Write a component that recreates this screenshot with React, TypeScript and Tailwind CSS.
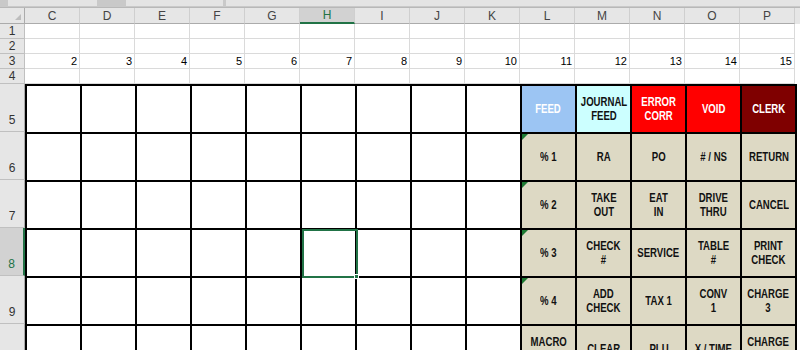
import React from "react";

const cols = ["C", "D", "E", "F", "G", "H", "I", "J", "K", "L", "M", "N", "O", "P"];

interface Key {
  lines: string[];
  cls: string;
  flag?: boolean;
}

const beige = "bg-[#ddd9c4] text-[#111]";

const keyRows: Key[][] = [
  [
    { lines: ["FEED"], cls: "bg-[#9cc5f3] text-white" },
    { lines: ["JOURNAL", "FEED"], cls: "bg-[#ccffff] text-[#111]" },
    { lines: ["ERROR", "CORR"], cls: "bg-[#ff0000] text-white" },
    { lines: ["VOID"], cls: "bg-[#ff0000] text-white" },
    { lines: ["CLERK"], cls: "bg-[#7f0000] text-white" },
  ],
  [
    { lines: ["% 1"], cls: beige, flag: true },
    { lines: ["RA"], cls: beige },
    { lines: ["PO"], cls: beige },
    { lines: ["# / NS"], cls: beige },
    { lines: ["RETURN"], cls: beige },
  ],
  [
    { lines: ["% 2"], cls: beige, flag: true },
    { lines: ["TAKE", "OUT"], cls: beige },
    { lines: ["EAT", "IN"], cls: beige },
    { lines: ["DRIVE", "THRU"], cls: beige },
    { lines: ["CANCEL"], cls: beige },
  ],
  [
    { lines: ["% 3"], cls: beige, flag: true },
    { lines: ["CHECK", "#"], cls: beige },
    { lines: ["SERVICE"], cls: beige },
    { lines: ["TABLE", "#"], cls: beige },
    { lines: ["PRINT", "CHECK"], cls: beige },
  ],
  [
    { lines: ["% 4"], cls: beige, flag: true },
    { lines: ["ADD", "CHECK"], cls: beige },
    { lines: ["TAX 1"], cls: beige },
    { lines: ["CONV", "1"], cls: beige },
    { lines: ["CHARGE", "3"], cls: beige },
  ],
  [
    { lines: ["MACRO", "1"], cls: beige },
    { lines: ["CLEAR"], cls: beige },
    { lines: ["PLU"], cls: beige },
    { lines: ["X / TIME"], cls: beige },
    { lines: ["CHARGE", "4"], cls: beige },
  ],
];

function ColHeader({ name }: { name: string }) {
  const active = name === "H";
  return (
    <div
      className={`w-[55px] shrink-0 flex items-center justify-center border-r border-[#cfcfcf] ${
        active
          ? "bg-[#d2d2d2] text-[#217346] border-b-2 border-b-[#217346]"
          : "text-[#444] border-b border-b-[#ababab]"
      }`}
    >
      {name}
    </div>
  );
}

function SmallRow({ n }: { n: number }) {
  return (
    <div className="flex h-[15px]">
      <div className="w-[25px] shrink-0 flex items-end justify-center bg-[#e6e6e6] border-r border-b border-[#c0c0c0] text-[#333] leading-[13px] text-[12px]">
        {n}
      </div>
      {cols.map((c, i) => (
        <div
          key={c}
          className="w-[55px] shrink-0 bg-white border-r border-b border-[#dadada] flex items-end justify-end pr-[2px] text-black leading-[13px]"
        >
          {n === 3 ? i + 2 : ""}
        </div>
      ))}
    </div>
  );
}

function KeyCell({ k }: { k: Key }) {
  return (
    <div className={`relative flex items-center justify-center ${k.cls}`}>
      {k.flag && (
        <svg className="absolute left-0 top-0" width="6" height="6" viewBox="0 0 6 6">
          <polygon points="0,0 6,0 0,6" fill="#1d7a34" />
        </svg>
      )}
      <div className="flex flex-col items-center font-bold text-[12px] leading-[14px] scale-x-[0.8] whitespace-nowrap">
        {k.lines.map((l) => (
          <span key={l}>{l}</span>
        ))}
      </div>
    </div>
  );
}

export default function App() {
  const rowNums = [5, 6, 7, 8, 9, 10];
  return (
    <div className="w-[800px] h-[350px] overflow-hidden bg-white font-['Liberation_Sans',Arial,sans-serif] text-[11px] select-none">
      {/* ribbon remnants */}
      <div className="h-[8px] bg-[#c9c9c9] flex items-start gap-[3px] pl-[8px] border-b border-[#b8b8b8]">
        <div className="w-[89px] h-[6px] bg-[#e4e4e4]" />
        <div className="w-[23px]" />
        <div className="w-[97px] h-[6px] bg-[#e4e4e4]" />
        <div className="flex-1 h-[6px] bg-[#e4e4e4]" />
      </div>

      {/* column headers */}
      <div className="flex h-[16px] bg-[#e6e6e6] text-[12px]">
        <div className="w-[25px] shrink-0 relative border-r border-b border-[#ababab] bg-[#e6e6e6]">
          <svg className="absolute right-[3px] bottom-[3px]" width="6" height="6" viewBox="0 0 6 6">
            <polygon points="6,0 6,6 0,6" fill="#bdbdbd" />
          </svg>
        </div>
        {cols.map((c) => (
          <ColHeader key={c} name={c} />
        ))}
      </div>

      {[1, 2, 3, 4].map((n) => (
        <SmallRow key={n} n={n} />
      ))}

      {/* bordered area */}
      <div className="flex">
        <div className="w-[25px] shrink-0 flex flex-col">
          {rowNums.map((n) => (
            <div
              key={n}
              className={`h-[48px] shrink-0 flex items-end justify-center pb-[2px] text-[12px] border-b border-[#c0c0c0] ${
                n === 8
                  ? "bg-[#d2d2d2] text-[#217346] border-r-2 border-r-[#217346]"
                  : "bg-[#e6e6e6] text-[#333] border-r border-r-[#ababab]"
              }`}
            >
              {n}
            </div>
          ))}
        </div>
        <div className="grid grid-cols-[repeat(14,53px)] auto-rows-[46px] gap-[2px] bg-black pt-[2px] px-[2px] pb-[2px]">
          {rowNums.map((rn, ri) =>
            cols.map((c, ci) => {
              if (ci >= 9) {
                return <KeyCell key={c + rn} k={keyRows[ri][ci - 9]} />;
              }
              const selected = rn === 8 && c === "H";
              return (
                <div key={c + rn} className="relative bg-white">
                  {selected && (
                    <div className="absolute -top-[1px] left-0 -right-[3px] -bottom-[2px] border-2 border-[#217346] z-10">
                      <div className="absolute -right-[3px] -bottom-[3px] w-[5px] h-[5px] bg-[#217346] border border-white" />
                    </div>
                  )}
                </div>
              );
            })
          )}
        </div>
      </div>
    </div>
  );
}
